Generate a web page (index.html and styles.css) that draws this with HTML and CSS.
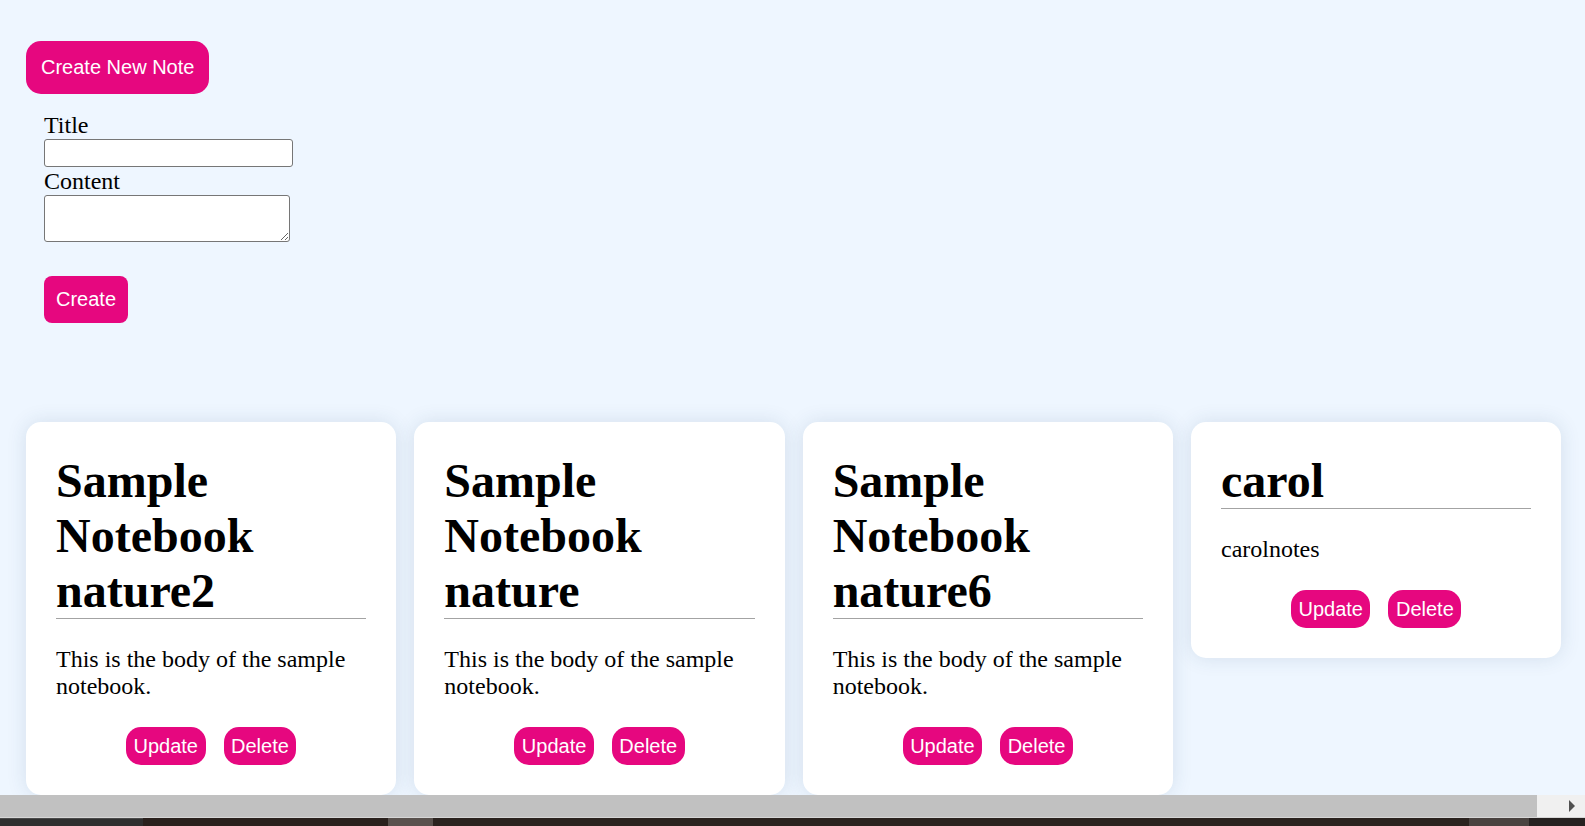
FILE: index.html
```html
<!DOCTYPE html>
<html lang="en">
<head>
<meta charset="utf-8">
<title>Notes</title>
<link rel="stylesheet" href="styles.css">
</head>
<body>
<div class="viewport">
  <button class="btn btn-new">Create New Note</button>
  <form class="note-form">
    <label class="label" for="title">Title</label>
    <input class="input" id="title" type="text">
    <label class="label" for="content">Content</label>
    <textarea class="textarea" id="content"></textarea>
    <button class="btn btn-create" type="button">Create</button>
  </form>
  <div class="cards">
    <div class="card">
      <h1 class="card-title">Sample Notebook nature2</h1>
      <p class="card-body">This is the body of the sample notebook.</p>
      <div class="card-actions"><button class="btn btn-small">Update</button><button class="btn btn-small">Delete</button></div>
    </div>
    <div class="card">
      <h1 class="card-title">Sample Notebook nature</h1>
      <p class="card-body">This is the body of the sample notebook.</p>
      <div class="card-actions"><button class="btn btn-small">Update</button><button class="btn btn-small">Delete</button></div>
    </div>
    <div class="card">
      <h1 class="card-title">Sample Notebook nature6</h1>
      <p class="card-body">This is the body of the sample notebook.</p>
      <div class="card-actions"><button class="btn btn-small">Update</button><button class="btn btn-small">Delete</button></div>
    </div>
    <div class="card">
      <h1 class="card-title">carol</h1>
      <p class="card-body">carolnotes</p>
      <div class="card-actions"><button class="btn btn-small">Update</button><button class="btn btn-small">Delete</button></div>
    </div>
  </div>
</div>
<div class="hscroll">
  <div class="hscroll-thumb"></div>
  <div class="hscroll-btn"><span class="hscroll-arrow"></span></div>
</div>
<div class="hscroll-edge"></div>
<div class="taskbar">
  <div class="tb-a"></div><div class="tb-b"></div><div class="tb-c"></div><div class="tb-d"></div><div class="tb-e"></div><div class="tb-f"></div>
</div>
</body>
</html>
```
FILE: styles.css
```css
html, body {
  margin: 0;
  padding: 0;
}
body {
  background: #eef6ff;
  font-family: "Liberation Serif", "Times New Roman", serif;
  font-size: 24px;
  color: #000;
  overflow: hidden;
  height: 826px;
}
.viewport {
  height: 795px;
  overflow: hidden;
  padding: 41px 0 0 26px;
  box-sizing: border-box;
}
.btn {
  font-family: "Liberation Sans", Arial, sans-serif;
  font-size: 20px;
  line-height: 23px;
  color: #fff;
  background: #e6077f;
  border: none;
  cursor: pointer;
  display: block;
}
.btn-new {
  padding: 15px 15px;
  border-radius: 15px;
}
.note-form {
  margin: 17px 0 0 18px;
  display: flex;
  flex-direction: column;
  align-items: flex-start;
}
.label {
  display: block;
  line-height: 28px;
}
.input {
  display: block;
  width: 249px;
  height: 28px;
  box-sizing: border-box;
  border: 1px solid #767676;
  border-radius: 3px;
  background: #fff;
  margin: 0;
  padding: 1px 3px;
}
.textarea {
  display: block;
  width: 246px;
  height: 47px;
  box-sizing: border-box;
  border: 1px solid #767676;
  border-radius: 3px;
  background: #fff;
  margin: 0;
  padding: 2px;
}
.btn-create {
  margin-top: 34px;
  padding: 12px 12px;
  border-radius: 8px;
}
.cards {
  margin-top: 99px;
  display: flex;
  align-items: flex-start;
  gap: 18px;
}
.card {
  width: 370.33px;
  flex: none;
  box-sizing: border-box;
  padding: 30px;
  background: #fff;
  border-radius: 15px;
  box-shadow: 0 0 20px rgba(40, 70, 110, 0.13);
}
.card-title {
  margin: 0;
  padding-top: 1px;
  font-size: 48px;
  font-weight: bold;
  line-height: 55px;
  border-bottom: 1px solid #a3a3a3;
}
.card-body {
  margin: 27px 0 27px;
  line-height: 27px;
}
.card-actions {
  display: flex;
  justify-content: center;
  gap: 18px;
}
.btn-small {
  padding: 7.5px 7.5px;
  border-radius: 15px;
}
.hscroll {
  display: flex;
  height: 22px;
}
.hscroll-thumb {
  flex: 1;
  background: #c1c1c1;
}
.hscroll-btn {
  width: 48px;
  background: #f0f0f0;
  display: flex;
  align-items: center;
  justify-content: flex-end;
  padding-right: 10px;
  box-sizing: border-box;
}
.hscroll-arrow {
  width: 0;
  height: 0;
  border-top: 6px solid transparent;
  border-bottom: 6px solid transparent;
  border-left: 6px solid #505050;
}
.hscroll-edge {
  height: 1px;
  background: #d6d6d6;
}
.taskbar {
  display: flex;
  height: 8px;
  background: #2a221e;
}
.tb-a { width: 143px; background: #2f2f2f; border-top: 1px solid #4a4a4a; box-sizing: border-box; }
.tb-b { width: 245px; background: #2a211d; }
.tb-c { width: 45px; background: #59514d; }
.tb-d { width: 1036px; background: #2b231f; }
.tb-e { width: 60px; background: #4a4340; }
.tb-f { flex: 1; background: #262120; }
```
